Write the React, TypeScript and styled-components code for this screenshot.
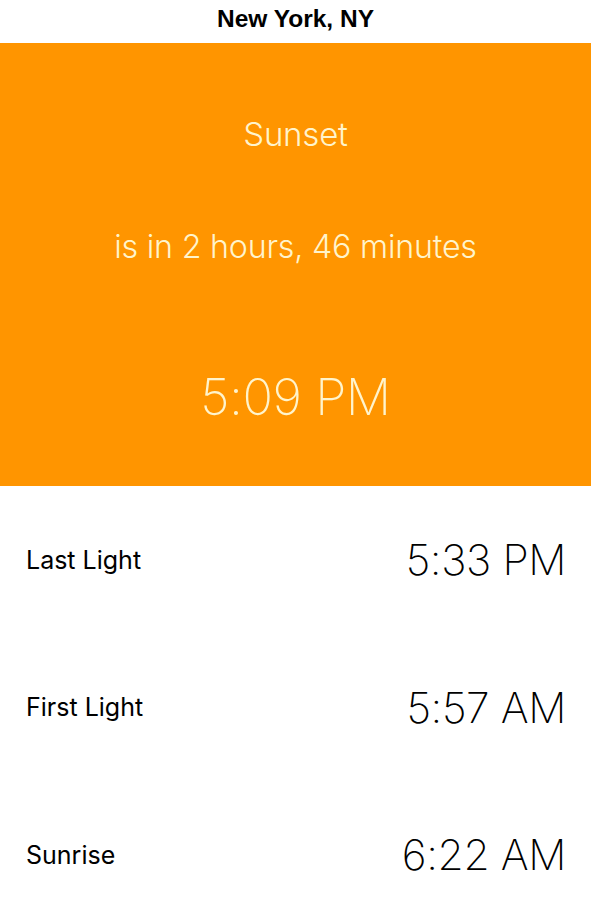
import React from 'react';
import styled, { createGlobalStyle } from 'styled-components';

const GlobalStyle = createGlobalStyle`
  html, body {
    margin: 0;
    padding: 0;
    background: #ffffff;
  }
  body {
    font-family: "Liberation Sans", Arial, sans-serif;
    -webkit-font-smoothing: antialiased;
  }
`;

const Screen = styled.div`
  width: 591px;
  height: 909px;
  overflow: hidden;
  display: flex;
  flex-direction: column;
  background: #ffffff;
`;

const Header = styled.header`
  height: 43px;
  flex-shrink: 0;
  display: flex;
  align-items: center;
  justify-content: center;
  font-family: "Liberation Sans", Arial, sans-serif;
  font-weight: 700;
  font-size: 24.5px;
  color: #000000;
  padding-bottom: 5px;
  box-sizing: border-box;
`;

const Hero = styled.section`
  height: 443px;
  flex-shrink: 0;
  background: #ff9500;
  color: #fff4cc;
  display: flex;
  flex-direction: column;
  align-items: center;
  box-sizing: border-box;
  padding-top: 71px;
`;

const HeroLine = styled.div<{ $gap: number; $size: number }>`
  margin-top: ${p => p.$gap}px;
  font-family: "Inter", "Liberation Sans", sans-serif;
  font-weight: 300;
  font-size: ${p => p.$size}px;
  line-height: 40px;
  letter-spacing: -0.2px;
`;

const HeroTime = styled.div`
  margin-top: 100px;
  font-family: "Inter", "Liberation Sans", sans-serif;
  font-weight: 200;
  font-size: 50.5px;
  line-height: 60px;
  letter-spacing: -0.5px;
`;

const Row = styled.div`
  height: 147.5px;
  flex-shrink: 0;
  display: flex;
  align-items: center;
  justify-content: space-between;
  padding: 0 25px 0 26px;
  box-sizing: border-box;
`;

const Label = styled.span`
  font-family: "Inter", "Liberation Sans", sans-serif;
  font-weight: 400;
  font-size: 25px;
  color: #000000;
`;

const Time = styled.span`
  font-family: "Inter", "Liberation Sans", sans-serif;
  font-weight: 200;
  font-size: 42.5px;
  letter-spacing: -0.4px;
  color: #000000;
`;

const times = [
  { label: 'Last Light', time: '5:33 PM' },
  { label: 'First Light', time: '5:57 AM' },
  { label: 'Sunrise', time: '6:22 AM' },
];

const App: React.FC = () => {
  return (
    <Screen>
      <GlobalStyle />
      <Header>New York, NY</Header>
      <Hero>
        <HeroLine $gap={0} $size={33}>Sunset</HeroLine>
        <HeroLine $gap={73} $size={32.2}>is in 2 hours, 46 minutes</HeroLine>
        <HeroTime>5:09 PM</HeroTime>
      </Hero>
      {times.map(t => (
        <Row key={t.label}>
          <Label>{t.label}</Label>
          <Time>{t.time}</Time>
        </Row>
      ))}
    </Screen>
  );
};

export default App;
